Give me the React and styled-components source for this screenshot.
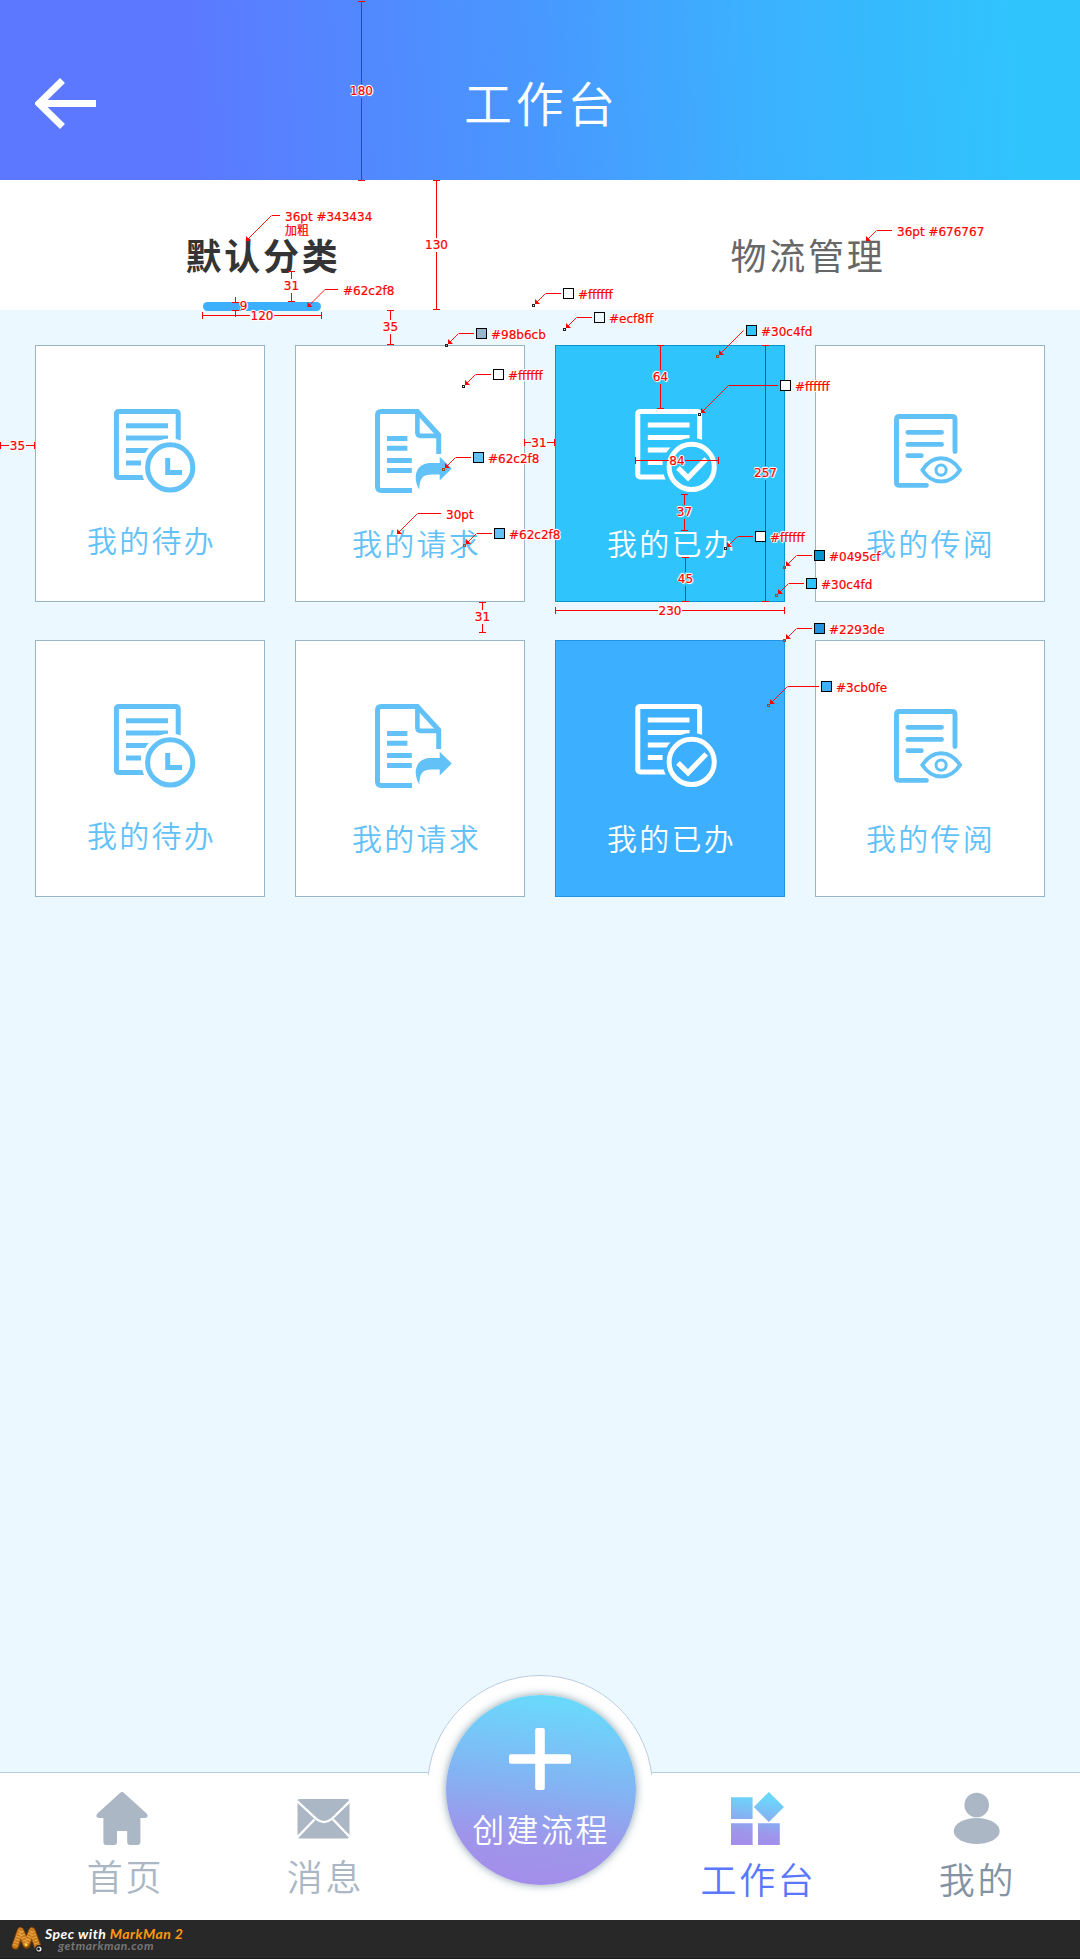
import React from 'react';
import styled, { createGlobalStyle, css } from 'styled-components';

const cjk = '"Noto Sans CJK SC", "Noto Sans", sans-serif';
const RED = '#ff0000';

const GlobalStyle = createGlobalStyle`
  *, *::before, *::after { box-sizing: border-box; }
  body { margin: 0; background: #ebf8ff; }
`;

const Page = styled.div`
  position: relative;
  display: flex;
  flex-direction: column;
  width: 1080px;
  height: 1959px;
  overflow: hidden;
  background: #ebf8ff;
  font-family: ${cjk};
  font-weight: 350;
`;

const Header = styled.header`
  display: grid;
  grid-template-columns: 200px 1fr 200px;
  height: 180px;
  padding-top: 66px;
  background: linear-gradient(87deg, #5c78ff 17%, #4997ff 49%, #3cb0fe 69%, #30c4fd 94%);
`;

const BackButton = styled.div`
  padding: 11px 0 0 35px;
  svg { display: block; }
`;

const Title = styled.h1`
  margin: 0;
  padding-left: 3px;
  height: 70px;
  line-height: 70px;
  font-size: 48px;
  font-weight: 350;
  letter-spacing: 0.075em;
  text-align: center;
  color: #fff;
`;

const Tabs = styled.nav`
  display: grid;
  grid-template-columns: 523px 1fr;
  flex: none;
  height: 130px;
  background: #fff;
`;

const Tab = styled.div`
  display: flex;
  flex-direction: column;
  align-items: center;
  padding-top: 50px;
  padding-left: ${(p) => (p.$active ? 3 : 13)}px;
  font-size: 36px;
  line-height: 48px;
  letter-spacing: 0.075em;
  font-weight: ${(p) => (p.$active ? 700 : 400)};
  color: ${(p) => (p.$active ? '#343434' : '#676767')};
`;

const Underline = styled.div`
  width: 118px;
  height: 9px;
  flex: none;
  margin: 24px 3px 0 0;
  border-radius: 5px;
  background: #3cb0fe;
`;

const Grid = styled.main`
  flex: 1;
  display: grid;
  grid-template-columns: repeat(4, 230px);
  grid-auto-rows: 257px;
  gap: 38px 30px;
  align-content: start;
  padding: 35px 35px 0;
`;

const tones = {
  plain: css`background: #fff; border-color: #98b6cb; color: #62c2f8;`,
  cyan: css`background: #30c4fd; border-color: #0495cf; color: #fff;`,
  blue: css`background: #3cb0fe; border-color: #2293de; color: #fff;`,
};

const Card = styled.div`
  display: flex;
  flex-direction: column;
  align-items: flex-start;
  border: 1px solid;
  padding-top: 63px;
  ${(p) => tones[p.$tone]}
`;

const IconBox = styled.div`
  height: 86px;
  margin-left: ${(p) => p.$left}px;
  padding-top: ${(p) => p.$top}px;
  svg { display: block; overflow: visible; }
`;

const CardLabel = styled.div`
  margin: ${(p) => p.$top}px 0 0 ${(p) => p.$left}px;
  font-size: 30px;
  line-height: 40px;
  letter-spacing: 0.075em;
  white-space: nowrap;
`;

const BottomBar = styled.nav`
  position: relative;
  flex: none;
  display: grid;
  grid-template-columns: 248px 152px 280px 154px 246px;
  height: 148px;
  background: #fff;
  border-top: 1px solid #b9cde0;
`;

const NavItem = styled.div`
  display: flex;
  flex-direction: column;
  align-items: center;
  padding-left: ${(p) => p.$shift || 0}px;
  color: ${(p) => p.$color};
  svg { display: block; margin-top: 19px; overflow: visible; color: #abb7c4; }
`;

const NavLabel = styled.span`
  margin-top: ${(p) => p.$top}px;
  margin-left: 3px;
  font-size: 36px;
  line-height: 48px;
  letter-spacing: 0.075em;
  white-space: nowrap;
`;

const Notch = styled.div`
  position: absolute;
  left: 427px;
  top: -98px;
  width: 226px;
  height: 100px;
  overflow: hidden;
  &::before {
    content: '';
    display: block;
    width: 226px;
    height: 226px;
    border: 1px solid #b9cde0;
    border-radius: 50%;
    background: #fff;
  }
`;

const CreateButton = styled.div`
  position: absolute;
  left: 446px;
  top: -78px;
  width: 190px;
  height: 190px;
  padding-top: 33px;
  display: flex;
  flex-direction: column;
  align-items: center;
  border-radius: 50%;
  background: linear-gradient(188deg, #6ad8fb 8%, #82b5f4 45%, #9f95ea 75%, #a38eeb 95%);
  box-shadow: 0 0 9px rgba(60, 100, 120, 0.62);
  color: #fff;
  font-size: 32px;
  line-height: 44px;
  letter-spacing: 0.075em;
  svg { display: block; margin-right: 2px; }
  span { margin-top: 16px; white-space: nowrap; }
`;

const Footer = styled.footer`
  flex: none;
  display: flex;
  height: 39px;
  padding-left: 11px;
  background: #282828;
  border-bottom: 1px solid #1c1c1c;
  svg { display: block; margin-top: 6px; }
`;

const Credit = styled.div`
  display: flex;
  flex-direction: column;
  padding: 7px 0 0 1px;
  font-family: Lato, "Open Sans", sans-serif;
  font-weight: 700;
  font-style: italic;
  color: #fff;
  font-size: 14px;
  line-height: 13px;
  letter-spacing: 0.45px;
  white-space: nowrap;
  em { color: #ff9712; }
  small {
    margin-left: 13px;
    font-size: 12px;
    line-height: 12px;
    letter-spacing: 0.55px;
    color: #777;
  }
`;

const SpecLayer = styled.div`
  position: absolute;
  inset: 0;
  pointer-events: none;
  svg { position: absolute; inset: 0; display: block; }
`;

const SpecText = styled.span`
  position: absolute;
  left: ${(p) => p.$x}px;
  top: ${(p) => Math.round(p.$y - 7)}px;
  ${(p) => p.$center && 'transform: translateX(-50%);'}
  font-family: "DejaVu Sans", "Noto Sans CJK SC", sans-serif;
  font-size: 12px;
  font-weight: 400;
  line-height: 15px;
  white-space: nowrap;
  color: ${RED};
  -webkit-text-stroke: 0.2px ${RED};
  text-shadow: 1px 0 #fff, -1px 0 #fff, 0 1px #fff, 0 -1px #fff, 1px 1px 1px #fff, -1px -1px 1px #fff;
`;

const Swatch = styled.i`
  position: absolute;
  left: ${(p) => p.$x}px;
  top: ${(p) => p.$y}px;
  width: 11px;
  height: 11px;
  border: 1px solid #000;
  background: ${(p) => p.$color};
`;

const PendingIcon = () => (
  <svg width="82" height="84" viewBox="0 0 82 84" fill="none" stroke="currentColor" strokeWidth="5">
    <mask id="cutClock" maskUnits="userSpaceOnUse" x="-2" y="-2" width="90" height="90">
      <rect x="-2" y="-2" width="90" height="90" fill="#fff" stroke="none" />
      <circle cx="56.2" cy="58.4" r="29" fill="#000" stroke="none" />
    </mask>
    <g mask="url(#cutClock)">
      <rect x="2.4" y="2.4" width="61.8" height="66.2" rx="2.2" />
      <path d="M12 16.7H54M12 29H54M12 41.6H54M12 54H27" />
    </g>
    <circle cx="56.2" cy="58.4" r="22.6" />
    <path d="M53.7 49V63.4H68" />
  </svg>
);

const DoneIcon = () => (
  <svg width="82" height="84" viewBox="0 0 82 84" fill="none" stroke="currentColor" strokeWidth="5">
    <mask id="cutCheck" maskUnits="userSpaceOnUse" x="-2" y="-2" width="90" height="90">
      <rect x="-2" y="-2" width="90" height="90" fill="#fff" stroke="none" />
      <circle cx="56.7" cy="57.9" r="29" fill="#000" stroke="none" />
    </mask>
    <g mask="url(#cutCheck)">
      <rect x="2.8" y="2.4" width="61.8" height="65.6" rx="2.2" />
      <path d="M12.8 16H54.5M12.8 28.6H54.5M12.8 41H54.5M12.8 53.4H27.6" />
    </g>
    <circle cx="56.7" cy="57.9" r="22.6" />
    <path d="M43 58.8 53 68.8 71.2 50" strokeWidth="5.2" />
  </svg>
);

const RequestIcon = () => (
  <svg width="78" height="84" viewBox="0 0 78 84" fill="none" stroke="currentColor" strokeWidth="5">
    <path d="M37 81.4H6.4Q2.5 81.4 2.5 77.4V6.4Q2.5 2.5 6.4 2.5H42.4L63.7 26V45" />
    <path d="M42.4 2.5V23.6Q42.4 26.9 45.6 26.9H63.7" strokeWidth="4.6" />
    <path d="M12 29.6H32.4M12 39.3H32.4M12 51.6H36.8M12 61.6H36.8" />
    <path
      d="M44.3 80.4C40.6 74.5 39.6 67 42 62 44.3 56.6 50 54 56 54H64.7V47.8L76.8 59.6 64.7 71.4V65.4H57C48 65.4 44.6 68.4 44.3 80.4Z"
      fill="currentColor"
      stroke="none"
    />
  </svg>
);

const ReviewIcon = () => (
  <svg width="70" height="76" viewBox="0 0 70 76" fill="none" stroke="currentColor" strokeWidth="4.9" strokeLinecap="round">
    <path d="M32.4 71.4H5.5Q2.5 71.4 2.5 68.4V5.5Q2.5 2.5 5.5 2.5H58Q61 2.5 61 5.5V37.6" />
    <path d="M13.8 18.3H47.6M13.8 30.4H47.6M13.8 41.7H27.4" strokeWidth="4.7" />
    <path
      d="M28.3 56C33.4 48.2 40 44.3 47.1 44.3S61 48.2 66.1 56C61 63.8 54.2 67.6 47.1 67.6S33.4 63.8 28.3 56Z"
      strokeWidth="4"
      strokeLinejoin="round"
    />
    <circle cx="47.1" cy="56.1" r="5.1" strokeWidth="3" />
  </svg>
);

const HomeIcon = () => (
  <svg width="52" height="54" viewBox="2 0 52 54" fill="currentColor">
    <path d="M24 .9Q26 -.7 28 .9L50.600 21.600Q53.400 25.600 49 26H44.400V50Q44.400 53 41.400 53H34.200Q31.200 53 31.200 50V39H21V50Q21 53 18 53H10.400Q7.400 53 7.400 50V26H3Q-1.400 25.600 1.400 21.600Z" />
  </svg>
);

const MailIcon = () => (
  <svg width="52" height="54" viewBox="0.500 0 52 54">
    <rect y="7" width="52" height="39.600" rx="2" fill="currentColor" />
    <path d="M-.5 9 19 27.200Q26.500 33 34 27.200L53 8.600M-.5 45.600 17 27.500M53 45.600 35.600 27.500" fill="none" stroke="#fff" strokeWidth="2.300" />
  </svg>
);

const AppsIcon = () => (
  <svg width="54" height="54" viewBox="-1 0 54 54">
    <defs>
      <linearGradient id="apps" gradientUnits="userSpaceOnUse" x1="30" y1="2" x2="24" y2="52">
        <stop offset="0.05" stopColor="#6ad8fb" />
        <stop offset="0.5" stopColor="#86b0f2" />
        <stop offset="0.8" stopColor="#9f95ea" />
        <stop offset="1" stopColor="#a38eeb" />
      </linearGradient>
    </defs>
    <path d="M0 5.200H21.600V27H0ZM0 31.200H21.600V53H0ZM27 31.200H48.800V53H27ZM37.900 0 53 15 37.900 30 22.800 15Z" fill="url(#apps)" />
  </svg>
);

const UserIcon = () => (
  <svg width="46" height="54" viewBox="-0.700 0 46 54" fill="currentColor">
    <circle cx="23" cy="13" r="12.300" />
    <ellipse cx="23" cy="39" rx="23" ry="13" />
  </svg>
);

const WormLogo = () => (
  <svg width="33" height="29" viewBox="0 0 33 29" fill="none" strokeLinecap="round" strokeLinejoin="round">
    <path d="M4.500 20 9.500 5 15.500 19 21 5 27 21" stroke="#7d4208" strokeWidth="7.600" />
    <path d="M4.200 19.500 9.500 4.600 15.200 18 21 4.600 26.500 20.500" stroke="#c97a1a" strokeWidth="5.800" />
    <path d="M4.200 19.500 9.500 4.600 15.200 18 21 4.600 26.500 20.500" stroke="#e9a94c" strokeWidth="5" strokeDasharray="0.900 2" strokeLinecap="butt" />
    <circle cx="15" cy="18.700" r="1.300" fill="#ffe14a" />
    <circle cx="28" cy="23" r="3.300" fill="#e8e8e8" stroke="#1a1a1a" strokeWidth="1.400" />
    <circle cx="27.500" cy="23" r="1.400" fill="#111" />
  </svg>
);

const cards = [
  { icon: PendingIcon, label: '我的待办', iconX: 78, x: 51, top: 24 },
  { icon: RequestIcon, label: '我的请求', iconX: 79, x: 56, top: 27 },
  { icon: DoneIcon, label: '我的已办', iconX: 79, x: 51, top: 27, active: true },
  { icon: ReviewIcon, label: '我的传阅', iconX: 78, x: 50, top: 27, iconTop: 5 },
];

const CardRow = ({ activeTone }) =>
  cards.map(({ icon: Icon, label, iconX, x, top, active, iconTop = 0 }) => (
    <Card key={label} $tone={active ? activeTone : 'plain'}>
      <IconBox $left={iconX} $top={iconTop}>
        <Icon />
      </IconBox>
      <CardLabel $left={x} $top={top}>{label}</CardLabel>
    </Card>
  ));

// Colour callouts: swatch corner; the leader always runs down-left at 45 degrees.
const colours = [
  [563, 288, '#ffffff'],
  [594, 312, '#ecf8ff'],
  [476, 328, '#98b6cb'],
  [493, 369, '#ffffff'],
  [473, 452, '#62c2f8'],
  [494, 528, '#62c2f8'],
  [746, 325, '#30c4fd', 743.5, 717.5, 356.5],
  [780, 380, '#ffffff', 728.5, 699.5, 414.5],
  [755, 531, '#ffffff'],
  [814, 550, '#0495cf'],
  [806, 578, '#30c4fd'],
  [814, 623, '#2293de'],
  [821, 681, '#3cb0fe', 787.5, 768.5, 705.5],
];

const notes = [
  { x: 285, y: 217, text: '36pt #343434', line: [279.5, 215.5, 271.5, 246, 241] },
  { x: 285, y: 231, text: '加粗' },
  { x: 897, y: 231.5, text: '36pt #676767', line: [891.5, 230.5, 876.5, 866, 241] },
  { x: 343, y: 291, text: '#62c2f8', line: [337.5, 289.5, 325, 307.5, 307] },
  { x: 446, y: 515, text: '30pt', line: [441, 513.5, 417.5, 397, 534] },
];

// Dimensions: axis, fixed coordinate, start, end, label centre, label text.
const dims = [
  ['v', 361.5, 1.5, 180.5, 91, '180'],
  ['v', 436.5, 180.5, 309.5, 245, '130'],
  ['v', 291.5, 271.5, 301.5, 286, '31'],
  ['v', 390.5, 310.5, 344.5, 327, '35'],
  ['v', 482.5, 602.5, 632.5, 617, '31'],
  ['v', 660.5, 345.5, 408.5, 377, '64'],
  ['v', 684.5, 494.5, 530.5, 512, '37'],
  ['v', 685.5, 557.5, 601.5, 579, '45'],
  ['v', 765.5, 345.5, 601.5, 473, '257'],
  ['h', 315.5, 202.5, 321.5, 262, '120'],
  ['h', 445.5, 0.5, 34.5, 17.5, '35'],
  ['h', 442.5, 524.5, 554.5, 539, '31'],
  ['h', 460.5, 635.5, 718.5, 677, '84'],
  ['h', 610.5, 555.5, 784.5, 670, '230'],
];

const dimPath = ([axis, at, a, b, mid, text]) => {
  if (axis === 'v') {
    return `M${at - 3.5} ${a}h7M${at} ${a}V${mid - 7}M${at} ${mid + 7}V${b}M${at - 3.5} ${b}h7`;
  }
  const half = text.length * 3.8 + 0.5;
  return `M${a} ${at - 3.5}v7M${a} ${at}H${mid - half}M${mid + half} ${at}H${b}M${b} ${at - 3.5}v7`;
};

const Leader = ({ sx, sy, ex, tx, ty }) => (
  <>
    <path d={`M${sx} ${sy}H${ex}`} />
    <path d={`M${ex} ${sy}L${tx} ${ty}`} strokeWidth="0.9" shapeRendering="auto" />
    <path d={`M${tx} ${ty}v-5l5 5z`} fill={RED} stroke="none" shapeRendering="auto" />
  </>
);

const Spec = () => (
  <SpecLayer>
    <svg width="1080" height="1959" fill="none" stroke={RED} strokeWidth="1" shapeRendering="crispEdges">
      {dims.map((d, i) => <path key={i} d={dimPath(d)} />)}
      <path d="M235.500 297V302M232 302.500h7M232 310.500h7M235.500 311V317" />
      {notes.filter((n) => n.line).map(({ text, line: [sx, sy, ex, tx, ty] }) => (
        <Leader key={text} sx={sx} sy={sy} ex={ex} tx={tx} ty={ty} />
      ))}
      {colours.map(([x, y, , ex = x - 17.5, mx = x - 29.5, my = y + 17.5], i) => (
        <g key={i}>
          <Leader sx={x - 2.5} sy={y + 5.5} ex={ex} tx={mx + 1.5} ty={my - 1.5} />
          <rect x={mx - 1} y={my - 1} width="2" height="2" stroke={i < 4 || i === 7 || i === 8 ? '#222' : '#a04a20'} />
        </g>
      ))}
    </svg>
    {colours.map(([x, y, c], i) => (
      <React.Fragment key={i}>
        <Swatch $x={x} $y={y} $color={c} />
        <SpecText $x={x + 15} $y={y + 7}>{c}</SpecText>
      </React.Fragment>
    ))}
    {notes.map((n) => <SpecText key={n.text} $x={n.x} $y={n.y}>{n.text}</SpecText>)}
    {dims.map(([axis, at, , , mid, text], i) => (
      <SpecText key={i} $center $x={axis === 'v' ? at : mid} $y={axis === 'v' ? mid : at + 0.5}>{text}</SpecText>
    ))}
    <SpecText $center $x={243.5} $y={306}>9</SpecText>
  </SpecLayer>
);

export default function App() {
  return (
    <Page>
      <GlobalStyle />
      <Header>
        <BackButton>
          <svg width="64" height="54" viewBox="0 0 64 54" fill="none" stroke="#fff" strokeWidth="7">
            <path d="M61 26.500H5M27.500 3.500 4 26.500 27.500 49.500" />
          </svg>
        </BackButton>
        <Title>工作台</Title>
      </Header>
      <Tabs>
        <Tab $active>
          默认分类
          <Underline />
        </Tab>
        <Tab>物流管理</Tab>
      </Tabs>
      <Grid>
        <CardRow activeTone="cyan" />
        <CardRow activeTone="blue" />
      </Grid>
      <BottomBar>
        <Notch />
        <NavItem $color="#abb7c4">
          <HomeIcon />
          <NavLabel $top={5}>首页</NavLabel>
        </NavItem>
        <NavItem $color="#abb7c4">
          <MailIcon />
          <NavLabel $top={5}>消息</NavLabel>
        </NavItem>
        <CreateButton>
          <svg width="62" height="62" viewBox="0 0 62 62" fill="#fff">
            <rect x="26.200" width="9.600" height="62" rx="2" />
            <rect y="26.200" width="62" height="9.600" rx="2" />
          </svg>
          <span>创建流程</span>
        </CreateButton>
        <span />
        <NavItem $color="#5a78ff">
          <AppsIcon />
          <NavLabel $top={8}>工作台</NavLabel>
        </NavItem>
        <NavItem $color="#8493a4" $shift={38}>
          <UserIcon />
          <NavLabel $top={8}>我的</NavLabel>
        </NavItem>
      </BottomBar>
      <Footer>
        <WormLogo />
        <Credit>
          <span>Spec with <em>MarkMan 2</em></span>
          <small>getmarkman.com</small>
        </Credit>
      </Footer>
      <Spec />
    </Page>
  );
}
